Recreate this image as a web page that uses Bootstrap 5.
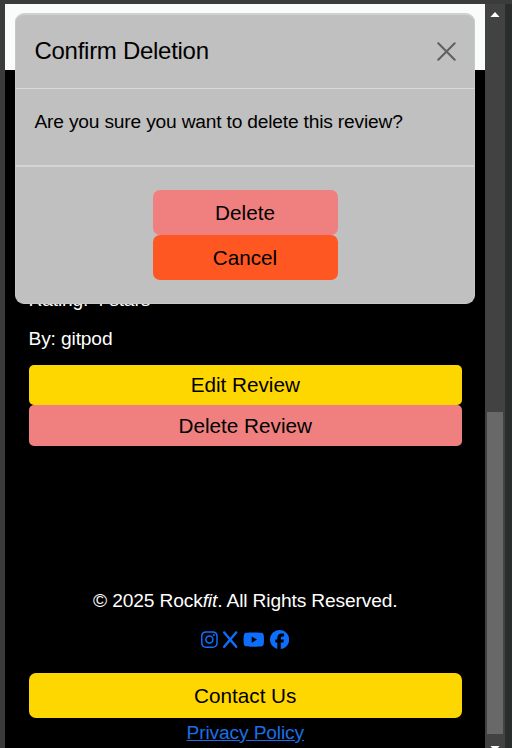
<!DOCTYPE html>
<html lang="en">
<head>
<meta charset="utf-8">
<meta name="viewport" content="width=device-width, initial-scale=1">
<title>Rockfit – Confirm Deletion</title>
<link href="https://cdn.jsdelivr.net/npm/bootstrap@5.3.0/dist/css/bootstrap.min.css" rel="stylesheet">
<style>
  html, body { height: 100%; overflow: hidden; }
  body { font-family: "Liberation Sans", Arial, sans-serif; font-size: 19.2px; line-height: 1.5; background: #3b3b3b; }
  .frame { height: 748px; padding: 4px 0 0 5px; }
  .viewport { width: 480px; background: #000; color: #fff; }
  .topbar { height: 65.5px; background: #fafcfb; flex: none; }
  .review { padding: 216px 23px 0 23.5px; }
  .review p { margin: 0 0 11px; line-height: 28.8px; letter-spacing: -.14px; }
  .act { --bs-btn-padding-y: 0; --bs-btn-font-size: 20.7px; --bs-btn-line-height: 1; --bs-btn-color: #000; border: 0; height: 45px; border-radius: 7px; padding-top: 2px; }
  .act-sm { height: 40.4px; border-radius: 5px; padding-top: 1px; }
  .gold { background: #ffd700; }
  .coral { background: #f08080; }
  .orange { background: #ff5722; }
  .act:hover { filter: brightness(.95); color: #000; }
  .site-footer { padding: 141px 23px 0 23.5px; }
  .site-footer p { margin: 0 0 9.8px; line-height: 28.8px; letter-spacing: -.14px; }
  .social { height: 29px; gap: 5.3px; margin-bottom: 18.4px; color: #0d6efd; }
  .social svg { height: 19.2px; width: auto; display: block; fill: currentColor; }
  .privacy { color: #1a6fe6; line-height: 28.8px; letter-spacing: -.14px; margin-top: 1px; }
  .dialog-box { position: absolute; left: 15px; top: 13px; width: 460px; height: 291px; background: #c0c0c0; color: #000; border: 1px solid #c7c8c8; border-top: 2px solid #cfd0d0; border-radius: 9px; }
  .dialog-box .modal-header { height: 74px; padding: 0 18px 0 18.5px; border-bottom: 1px solid #dadada; }
  .dialog-box .modal-title { font-size: 24px; font-weight: 400; line-height: 1.5; letter-spacing: -.28px; padding-bottom: 2px; }
  .dialog-box .modal-body { flex: none; height: 78px; padding: 18.5px; border-bottom: 2px solid #d4d4d4; letter-spacing: -.19px; }
  .dialog-box .modal-footer { padding: 23px 0 0; border: 0; }
  .dialog-box .act { width: 185px; margin: 0; }
  .x-close { border: 0; background: none; padding: 0; line-height: 0; }
  .track { width: 20px; background: #424242; padding: 8px 2px 0; }
  .track svg { display: block; margin: 0 auto; fill: #fff; flex: none; }
  .thumb { width: 16px; height: 322px; background: #686868; margin-top: 395px; }
  .edge { width: 7px; background: #2a2d2b; }
</style>
</head>
<body>
<div class="frame d-flex overflow-hidden">
  <main class="viewport d-flex flex-column overflow-hidden">
    <header class="topbar"></header>
    <section class="review">
      <p>Rating: 4 stars</p>
      <p>By: gitpod</p>
      <div class="d-flex flex-column">
        <button class="btn act act-sm gold w-100" type="button">Edit Review</button>
        <button class="btn act act-sm coral w-100" type="button">Delete Review</button>
      </div>
    </section>
    <footer class="site-footer text-center">
      <p>© 2025 Rock<em>fit</em>. All Rights Reserved.</p>
      <div class="social d-flex justify-content-center align-items-center">
        <svg viewBox="0 0 448 512"><path d="M224.1 141c-63.6 0-114.9 51.3-114.9 114.9s51.3 114.9 114.9 114.9S339 319.5 339 255.9 287.7 141 224.1 141zm0 189.6c-41.1 0-74.7-33.5-74.7-74.7s33.5-74.7 74.7-74.7 74.7 33.5 74.7 74.7-33.6 74.7-74.7 74.7zm146.4-194.3c0 14.9-12 26.8-26.8 26.8-14.9 0-26.8-12-26.8-26.8s12-26.8 26.8-26.8 26.8 12 26.8 26.8zm76.1 27.2c-1.7-35.9-9.9-67.7-36.2-93.9-26.2-26.2-58-34.4-93.9-36.2-37-2.1-147.9-2.1-184.9 0-35.8 1.7-67.6 9.9-93.9 36.1s-34.4 58-36.2 93.9c-2.1 37-2.1 147.9 0 184.9 1.7 35.9 9.9 67.7 36.2 93.9s58 34.4 93.9 36.2c37 2.1 147.9 2.1 184.9 0 35.9-1.7 67.7-9.9 93.9-36.2 26.2-26.2 34.4-58 36.2-93.9 2.1-37 2.1-147.8 0-184.8zM398.8 388c-7.8 19.6-22.9 34.7-42.6 42.6-29.5 11.7-99.5 9-132.1 9s-102.7 2.6-132.1-9c-19.6-7.8-34.7-22.9-42.6-42.6-11.7-29.5-9-99.5-9-132.1s-2.6-102.7 9-132.1c7.8-19.6 22.9-34.7 42.6-42.6 29.5-11.7 99.5-9 132.1-9s102.7-2.6 132.1 9c19.6 7.8 34.7 22.9 42.6 42.6 11.7 29.5 9 99.5 9 132.1s2.7 102.7-9 132.1z"/></svg>
        <svg viewBox="0 0 384 512"><path d="M376.6 84.5c11.3-13.6 9.5-33.8-4.1-45.1s-33.8-9.5-45.1 4.1L192 206 56.6 43.5C45.3 29.9 25.1 28.1 11.5 39.4S-3.9 70.9 7.4 84.5L150.3 256 7.4 427.5c-11.3 13.6-9.5 33.8 4.1 45.1s33.8 9.5 45.1-4.1L192 306 327.4 468.5c11.3 13.6 31.5 15.4 45.1 4.1s15.4-31.5 4.1-45.1L233.7 256 376.6 84.5z"/></svg>
        <svg viewBox="0 0 576 512"><path d="M549.7 124.1c-6.3-23.7-24.8-42.3-48.3-48.6C458.8 64 288 64 288 64S117.2 64 74.6 75.5c-23.5 6.3-42 24.9-48.3 48.6-11.4 42.9-11.4 132.3-11.4 132.3s0 89.4 11.4 132.3c6.3 23.7 24.8 41.5 48.3 47.8C117.2 448 288 448 288 448s170.8 0 213.4-11.5c23.5-6.3 42-24.2 48.3-47.8 11.4-42.9 11.4-132.3 11.4-132.3s0-89.4-11.4-132.3zM232.2 337.6V175.2l142.7 81.2-142.7 81.2z"/></svg>
        <svg viewBox="0 0 512 512"><path d="M512 256C512 114.6 397.4 0 256 0S0 114.6 0 256c0 120 82.7 220.8 194.2 248.5V334.2h-52.8V256h52.8v-33.7c0-87.1 39.4-127.5 125-127.5 16.2 0 44.2 3.2 55.7 6.4V172c-6-.6-16.5-1-29.6-1-42 0-58.2 15.9-58.2 57.2V256h83.6l-14.4 78.2H287v175.9C413.8 494.8 512 386.9 512 256z"/></svg>
      </div>
      <button class="btn act gold w-100 d-block" type="button">Contact Us</button>
      <a class="privacy d-inline-block" href="#">Privacy Policy</a>
    </footer>
  </main>
  <aside class="track d-flex flex-column">
    <svg width="10" height="5" viewBox="0 0 10 5"><path d="M5 0l4.6 5H.4z"/></svg>
    <div class="thumb flex-shrink-0"></div>
    <svg width="10" height="18" viewBox="0 0 10 18"><path d="M.4 12h9.2L5 17z"/></svg>
  </aside>
  <div class="edge"></div>
</div>

<div class="dialog-box modal-content" role="dialog" aria-labelledby="confirmTitle">
  <div class="modal-header flex-shrink-0">
    <h5 class="modal-title" id="confirmTitle">Confirm Deletion</h5>
    <button class="x-close" type="button" aria-label="Close">
      <svg width="19" height="19" viewBox="0 0 19 19" fill="none" stroke="#606060" stroke-width="2.1" stroke-linecap="round"><path d="M1.3 1.3l16.4 16.4M17.7 1.3L1.3 17.7"/></svg>
    </button>
  </div>
  <div class="modal-body">Are you sure you want to delete this review?</div>
  <div class="modal-footer d-flex flex-column align-items-center justify-content-start">
    <button class="btn act coral" type="button">Delete</button>
    <button class="btn act orange" type="button">Cancel</button>
  </div>
</div>
<script src="https://cdn.jsdelivr.net/npm/bootstrap@5.3.0/dist/js/bootstrap.bundle.min.js"></script>
</body>
</html>
